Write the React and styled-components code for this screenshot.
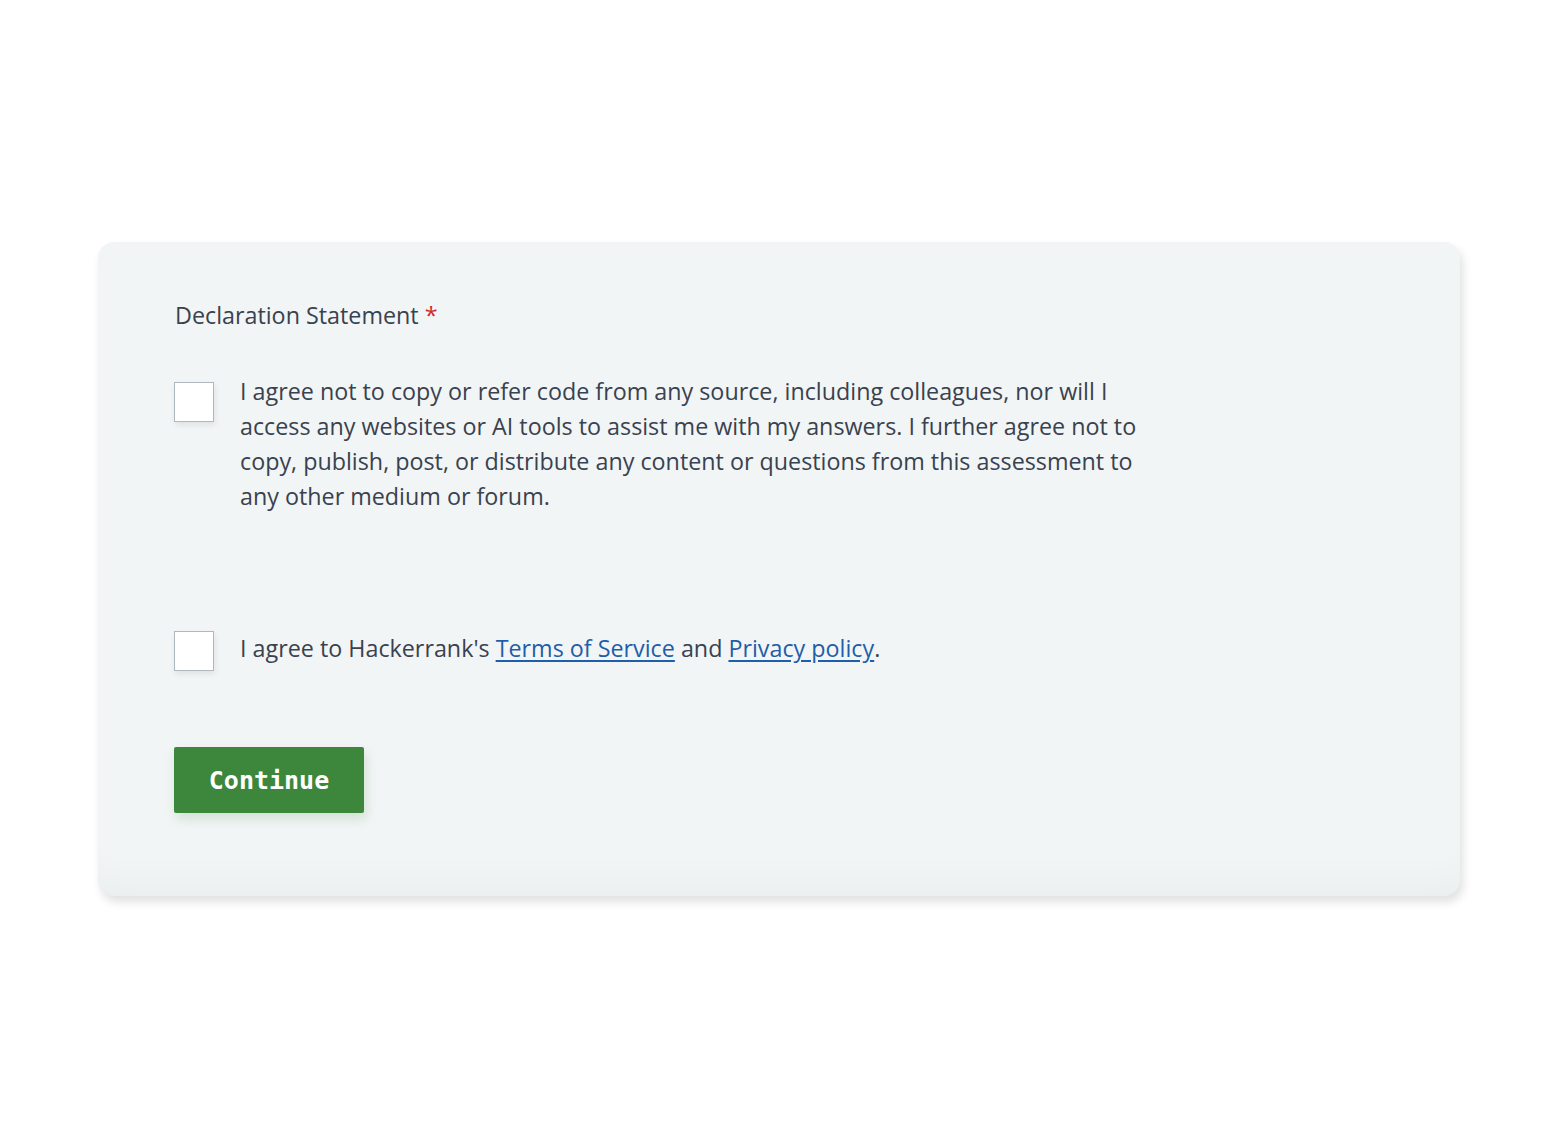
import React from "react";
import styled, { createGlobalStyle } from "styled-components";

const Global = createGlobalStyle`
  html, body { margin: 0; padding: 0; background: #ffffff; }
  body { font-family: "Open Sans", "Noto Sans", sans-serif; color: #39424e; }
`;

const Page = styled.div`
  width: 1560px;
  height: 1140px;
  box-sizing: border-box;
  padding: 242px 100px 0 98px;
`;

const Card = styled.section`
  width: 1362px;
  height: 654px;
  box-sizing: border-box;
  padding: 58px 77px 0 76px;
  background: #f2f5f6;
  border-radius: 16px;
  box-shadow: 3px 6px 10px rgba(0, 0, 0, 0.12), inset 0 -40px 40px -30px rgba(0, 0, 0, 0.035);
`;

const Label = styled.div`
  font-size: 23.3px;
  line-height: 30px;
  color: #39424e;
  margin-bottom: 44px;
  padding-left: 1px;
`;

const Req = styled.span`
  color: #d12a2a;
  margin-left: 6px;
`;

const Row = styled.label`
  display: flex;
  align-items: flex-start;
  gap: 26px;
  margin-bottom: ${(p) => p.$mb}px;
`;

const Box = styled.span`
  flex: none;
  width: 40px;
  height: 40px;
  box-sizing: border-box;
  margin-top: ${(p) => p.$mt}px;
  background: #ffffff;
  border: 1px solid #aeb8be;
  box-shadow: 1px 3px 6px rgba(0, 0, 0, 0.08);
`;

const Text = styled.p`
  margin: 0;
  max-width: 920px;
  font-size: 23.3px;
  line-height: 35px;
  color: #39424e;
`;

const Link = styled.a`
  color: #1f5ea8;
  text-decoration: underline;
  text-underline-offset: 3px;
`;

const Button = styled.button`
  width: 190px;
  height: 66px;
  border: none;
  border-radius: 2px;
  background: #3c873c;
  color: #ffffff;
  font-family: "DejaVu Sans Mono", "Liberation Mono", monospace;
  font-weight: bold;
  font-size: 25px;
  box-shadow: 2px 6px 12px rgba(60, 135, 60, 0.18);
  cursor: pointer;
`;

export default function App() {
  return (
    <>
      <Global />
      <Page>
        <Card>
          <Label>
            Declaration Statement<Req>*</Req>
          </Label>
          <Row $mb={117}>
            <Box $mt={8} />
            <Text>
              I agree not to copy or refer code from any source, including colleagues, nor will I
              access any websites or AI tools to assist me with my answers. I further agree not to
              copy, publish, post, or distribute any content or questions from this assessment to
              any other medium or forum.
            </Text>
          </Row>
          <Row $mb={76}>
            <Box $mt={0} />
            <Text>
              I agree to Hackerrank's <Link href="#">Terms of Service</Link> and{" "}
              <Link href="#">Privacy policy</Link>.
            </Text>
          </Row>
          <Button>Continue</Button>
        </Card>
      </Page>
    </>
  );
}
